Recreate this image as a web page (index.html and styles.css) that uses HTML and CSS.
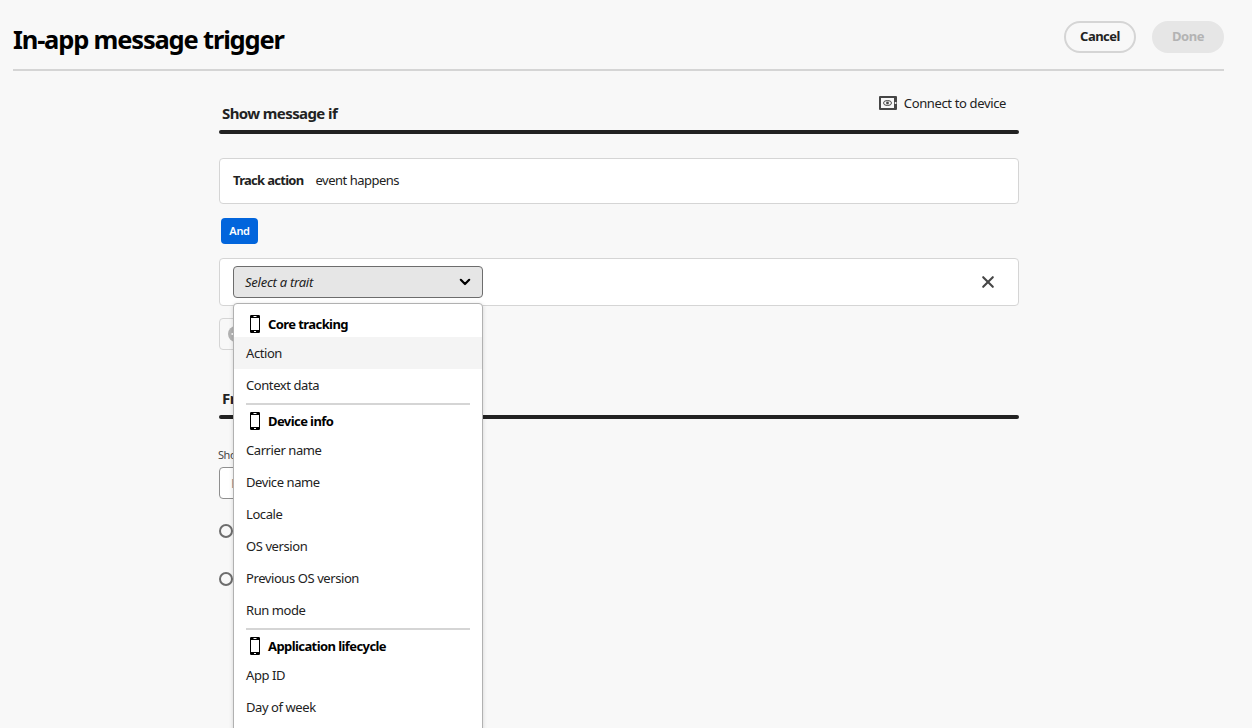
FILE: index.html
```html
<!DOCTYPE html>
<html lang="en">
<head>
<meta charset="utf-8">
<title>In-app message trigger</title>
<link rel="stylesheet" href="styles.css">
</head>
<body>
<svg class="defs" width="0" height="0">
  <symbol id="phone" viewBox="0 0 10 18"><path fill-rule="evenodd" d="M1.2 0h7.6Q10 0 10 1.2v15.6Q10 18 8.800 18H1.200Q0 18 0 16.800V1.200Q0 0 1.200 0ZM1 3v12h8V3ZM3.500 1v1h3V1ZM4 16v1h2v-1Z"/></symbol>
</svg>
<header class="header">
  <h1 class="title">In-app message trigger</h1>
  <div class="actions">
    <button class="btn">Cancel</button>
    <button class="btn btn-disabled" disabled>Done</button>
  </div>
</header>
<main class="main">
  <section class="section-head first">
    <h2 class="section-title">Show message if</h2>
    <a class="connect">
      <svg width="18" height="14" viewBox="0 0 18 14"><path fill="#464646" fill-rule="evenodd" d="M1 0h16q1 0 1 1v12q0 1-1 1H1q-1 0-1-1V1Q0 0 1 0ZM2 2v10h13V2Z"/><circle cx="16.600" cy="7" r="1" fill="#f8f8f8"/><ellipse cx="8.500" cy="7" rx="4" ry="2.500" fill="none" stroke="#464646"/><circle cx="8.500" cy="7" r="1.400" fill="#464646"/></svg>
      <span>Connect to device</span>
    </a>
  </section>
  <div class="card event"><b class="event-name">Track action</b><span class="event-text">event happens</span></div>
  <div class="and">And</div>
  <div class="card trait">
    <div class="picker-wrap">
      <button class="picker"><i class="placeholder">Select a trait</i>
        <svg width="12" height="8" viewBox="0 0 12 8"><path d="M1.800 1.800 6 6l4.200-4.200" fill="none" stroke="#000" stroke-width="2.200" stroke-linecap="round" stroke-linejoin="round"/></svg>
      </button>
      <div class="menu">
        <div class="group"><svg class="phone"><use href="#phone"/></svg><span>Core tracking</span></div>
        <div class="item active">Action</div>
        <div class="item">Context data</div>
        <hr class="divider">
        <div class="group"><svg class="phone"><use href="#phone"/></svg><span>Device info</span></div>
        <div class="item">Carrier name</div>
        <div class="item">Device name</div>
        <div class="item">Locale</div>
        <div class="item">OS version</div>
        <div class="item">Previous OS version</div>
        <div class="item">Run mode</div>
        <hr class="divider">
        <div class="group"><svg class="phone"><use href="#phone"/></svg><span>Application lifecycle</span></div>
        <div class="item">App ID</div>
        <div class="item">Day of week</div>
        <div class="item"></div>
      </div>
    </div>
    <svg class="close" width="14" height="14" viewBox="0 0 14 14"><path d="M2.200 2.200l9.600 9.600M11.800 2.200l-9.600 9.600" stroke="#464646" stroke-width="2.100" stroke-linecap="round"/></svg>
  </div>
  <div class="add"><svg width="16" height="16" viewBox="0 0 16 16"><circle cx="8" cy="8" r="8" fill="#b3b3b3"/><path d="M3.500 8h9M8 3.500v9" stroke="#f8f8f8" stroke-width="2"/></svg></div>
  <section class="section-head second"><h2 class="section-title">Fr</h2></section>
  <div class="field-label">Sho</div>
  <div class="field"><span>E</span></div>
  <div class="radio"></div>
  <div class="radio"></div>
</main>
</body>
</html>
```
FILE: styles.css
```css
* { box-sizing: border-box; }
body {
  margin: 0;
  height: 728px;
  overflow: hidden;
  background: #f8f8f8;
  color: #222;
  font: 13px/20px "Noto Sans", sans-serif;
  letter-spacing: -0.42px;
}
.defs { display: block; }
.header {
  display: flex;
  justify-content: space-between;
  margin: 0 28px 0 13px;
  height: 71px;
  padding-top: 21px;
  border-bottom: 2px solid #d5d5d5;
}
.title {
  margin: 0;
  color: #000;
  font-size: 25.5px;
  line-height: 37px;
  font-weight: 700;
  letter-spacing: -1.18px;
  white-space: nowrap;
}
.actions { display: flex; gap: 16px; }
.btn {
  width: 72px;
  height: 32px;
  padding: 0 0 2px;
  border: 2px solid #d5d5d5;
  border-radius: 16px;
  background: transparent;
  color: #222;
  font: 700 13px/20px "Noto Sans", sans-serif;
  letter-spacing: -0.5px;
}
.btn-disabled { background: #e6e6e6; border-color: #e6e6e6; color: #b3b3b3; }
.main { width: 800px; margin-left: 219px; }
.section-head {
  display: flex;
  justify-content: space-between;
  padding-left: 3px;
  position: relative;
}
.section-head::after {
  content: "";
  position: absolute;
  left: 0;
  right: 0;
  bottom: 0;
  height: 4px;
  border-radius: 2px;
  background: #222;
}
.first { height: 63px; padding-top: 22px; padding-right: 13px; }
.second { height: 48px; margin-top: 21px; padding-top: 16px; }
.section-title {
  margin: 9px 0 0;
  font-size: 15px;
  line-height: 22px;
  font-weight: 700;
  letter-spacing: -0.6px;
}
.second .section-title { margin: 0; }
.connect { display: flex; gap: 7px; height: 20px; letter-spacing: -0.36px; }
.connect svg { margin-top: 3px; }
.card { border: 1px solid #d5d5d5; border-radius: 4px; background: #fff; }
.event { display: flex; gap: 12px; height: 46px; margin-top: 24px; padding: 11px 13px; }
.event-name { letter-spacing: -0.7px; }
.event-text { letter-spacing: -0.5px; }
.and {
  width: 37px;
  height: 26px;
  margin: 14px 0 14px 2px;
  border-radius: 4px;
  background: #0265dc;
  color: #fff;
  font-size: 11px;
  line-height: 26px;
  font-weight: 600;
  letter-spacing: -0.3px;
  text-align: center;
}
.trait { display: flex; justify-content: space-between; height: 48px; padding: 7px 23px 0 13px; }
.close { margin-top: 9px; }
.picker-wrap { position: relative; width: 250px; }
.picker {
  display: flex;
  align-items: center;
  justify-content: space-between;
  width: 250px;
  height: 32px;
  padding: 0 11px;
  border: 1px solid #6d6d6d;
  border-radius: 4px;
  background: #e6e6e6;
  color: #222;
  font: 13px/20px "Noto Sans", sans-serif;
  letter-spacing: -0.25px;
}
.menu {
  position: absolute;
  z-index: 2;
  top: 37px;
  left: 0;
  width: 250px;
  padding-top: 7px;
  border: 1px solid #b1b1b1;
  border-radius: 4px;
  background: #fff;
  box-shadow: 0 1px 4px rgba(0, 0, 0, 0.15);
}
.group { display: flex; align-items: center; gap: 8px; height: 26px; padding-left: 16px; color: #000; font-weight: 700; letter-spacing: -0.58px; }
.phone { width: 10px; height: 18px; }
.item { height: 32px; padding-left: 12px; line-height: 32px; }
.active { background: #f4f4f4; }
.divider { height: 2px; margin: 2px 12px 3px; border: 0; background: #d5d5d5; }
.add { width: 120px; height: 32px; margin-top: 12px; padding: 7px 8px; border: 1px solid #d5d5d5; border-radius: 4px; }
.field-label { height: 18px; margin: 27px 0 0 -1px; color: #464646; font-size: 11px; line-height: 18px; }
.field { width: 200px; height: 32px; margin: 3px 0 25px; padding: 5px 11px; border: 1px solid #8f8f8f; border-radius: 4px; background: #fff; color: #8f8f8f; }
.radio { width: 14px; height: 14px; margin-bottom: 34px; border: 2px solid #6d6d6d; border-radius: 50%; }
```
